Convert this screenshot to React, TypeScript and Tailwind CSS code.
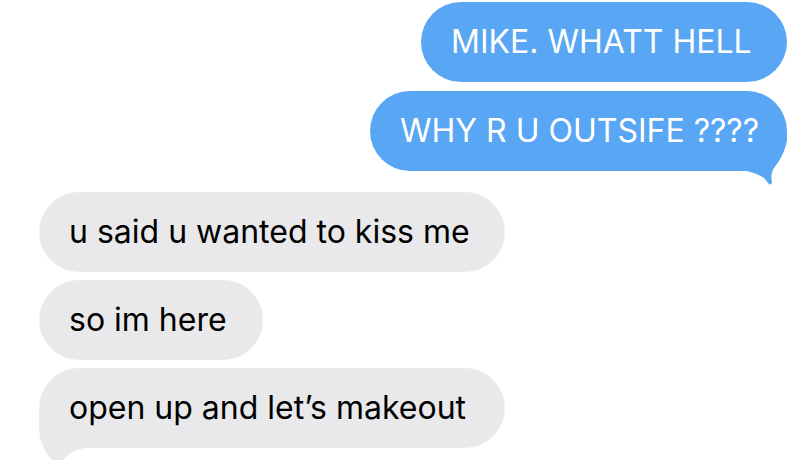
const sent = [
  { text: "MIKE. WHATT HELL", w: "w-[366px]", tail: false },
  { text: "WHY R U OUTSIFE ????", w: "w-[417px]", tail: true },
];

const received = [
  { text: "u said u wanted to kiss me", w: "w-[466px]", tail: false },
  { text: "so im here", w: "w-[224px]", tail: false },
  { text: "open up and let\u2019s makeout", w: "w-[466px]", tail: true },
];

function BlueTail() {
  return (
    <svg className="absolute right-[-3px] top-[39px] w-[60px] h-[60px]" viewBox="0 0 60 60">
      <path
        d="M0 0 L0 40 L10 40 C25 42 34 46 38 53 C39 55 42 55 42 52 C41 48 41 43 44 38 C50 30 55 22 57 10 L57 0 Z"
        fill="#58a6f4"
      />
    </svg>
  );
}

function GrayTail() {
  return (
    <svg className="absolute left-[-4px] top-[41px] w-[60px] h-[60px]" viewBox="0 0 60 60">
      <path
        d="M4 0 L4 18 C4 32 10 44 20 54 L24 58 L28 52 C32 46 38 41 50 39 L60 38 L60 0 Z"
        fill="#e9e9eb"
      />
    </svg>
  );
}

export default function App() {
  return (
    <div className="w-[812px] h-[460px] overflow-hidden bg-white font-['Inter',sans-serif] text-[32px]">
      {/* outgoing */}
      <div className="flex flex-col items-end gap-[9px] pt-[2px] pr-[25px]">
        {sent.map((m) => (
          <div
            key={m.text}
            className={`relative ${m.w} h-[80px] rounded-[40px] bg-[#58a6f4] text-white flex items-center pl-[30px]`}
          >
            {m.tail && <BlueTail />}
            <span className="relative">{m.text}</span>
          </div>
        ))}
      </div>

      {/* incoming */}
      <div className="flex flex-col items-start gap-[8px] mt-[21px] pl-[39px]">
        {received.map((m) => (
          <div
            key={m.text}
            className={`relative ${m.w} h-[80px] rounded-[40px] bg-[#e9e9eb] text-black flex items-center pl-[30px]`}
          >
            {m.tail && <GrayTail />}
            <span className="relative">{m.text}</span>
          </div>
        ))}
      </div>
    </div>
  );
}
